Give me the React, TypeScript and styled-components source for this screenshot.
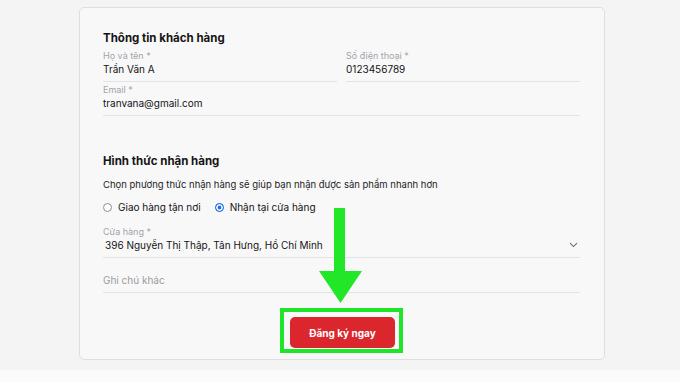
import React from 'react'
import styled, { createGlobalStyle } from 'styled-components'

const GlobalStyle = createGlobalStyle`
  html, body {
    margin: 0;
    padding: 0;
    background: #f4f4f5;
    font-family: Inter, "Noto Sans", "Liberation Sans", sans-serif;
    color: #141414;
  }
  * { box-sizing: border-box; }
`

const Page = styled.div`
  width: 680px;
  height: 382px;
  overflow: hidden;
  display: flex;
  flex-direction: column;
  padding-top: 7px;
`

const Card = styled.div`
  position: relative;
  width: 526px;
  margin-left: 79px;
  height: 353px;
  background: #f8f8f9;
  border: 1px solid #dedfe2;
  border-radius: 5px;
  padding: 22px 24px 0 23px;
  display: flex;
  flex-direction: column;
`

const BottomBand = styled.div`
  margin-top: 10px;
  height: 12px;
  background: #fbfbfb;
`

const Title = styled.h2<{ $top?: number }>`
  margin: ${({ $top }) => $top ?? 0}px 0 0 0;
  font-size: 11.5px;
  line-height: 16px;
  font-weight: 700;
`

const Row = styled.div`
  display: grid;
  grid-template-columns: 234px 234px;
  column-gap: 9px;
  margin-top: 4px;
`

const Field = styled.div<{ $top?: number; $pad?: number }>`
  display: flex;
  flex-direction: column;
  margin-top: ${({ $top }) => $top ?? 0}px;
  padding-bottom: ${({ $pad }) => $pad ?? 5}px;
  border-bottom: 1px solid #e2e3e6;
  position: relative;
`

const Label = styled.span`
  font-size: 9px;
  line-height: 12px;
  color: #a3a3aa;
`

const Value = styled.span<{ $muted?: boolean; $indent?: number }>`
  font-size: 10px;
  line-height: 14px;
  color: ${({ $muted }) => ($muted ? '#9b9ba2' : '#141414')};
  padding-left: ${({ $indent }) => $indent ?? 0}px;
`

const Desc = styled.p`
  margin: 10px 0 0 0;
  font-size: 9.5px;
  line-height: 12px;
  color: #1c1c1c;
`

const RadioRow = styled.div`
  display: flex;
  align-items: center;
  margin-top: 9px;
  height: 14px;
`

const RadioItem = styled.label`
  display: flex;
  align-items: center;
  gap: 6px;
  font-size: 10px;
  line-height: 14px;
  margin-right: 14px;
`

const RadioDot = styled.span<{ $checked?: boolean }>`
  width: 9px;
  height: 9px;
  border-radius: 50%;
  border: 1px solid ${({ $checked }) => ($checked ? '#1d6ee6' : '#8e8e93')};
  background: ${({ $checked }) => ($checked ? '#1d6ee6' : '#fff')};
  box-shadow: ${({ $checked }) => ($checked ? 'inset 0 0 0 1.6px #fff' : 'none')};
`

const Chevron = styled.svg`
  position: absolute;
  right: 2px;
  top: 16px;
`

const Actions = styled.div`
  display: flex;
  justify-content: center;
  margin-top: 24px;
`

const ButtonWrap = styled.div`
  position: relative;
  margin-left: 2px;
`

const Highlight = styled.div`
  position: absolute;
  left: -10px;
  right: -8px;
  top: -9px;
  bottom: -5px;
  border: 4px solid #1fe52a;
  pointer-events: none;
`

const SubmitButton = styled.button`
  width: 105px;
  height: 31px;
  border: none;
  border-radius: 5px;
  background: #da262c;
  color: #fff;
  font-family: Inter, "Noto Sans", "Liberation Sans", sans-serif;
  font-size: 10px;
  font-weight: 700;
  cursor: pointer;
`

const Arrow = styled.svg`
  position: absolute;
  left: 239px;
  top: 200px;
`

export default function App() {
  return (
    <>
      <GlobalStyle />
      <Page>
        <Card>
          <Title>Thông tin khách hàng</Title>
          <Row>
            <Field>
              <Label>Họ và tên *</Label>
              <Value>Trần Văn A</Value>
            </Field>
            <Field>
              <Label>Số điện thoại *</Label>
              <Value>0123456789</Value>
            </Field>
          </Row>
          <Field $top={2}>
            <Label>Email *</Label>
            <Value>tranvana@gmail.com</Value>
          </Field>

          <Title $top={37}>Hình thức nhận hàng</Title>
          <Desc>Chọn phương thức nhận hàng sẽ giúp bạn nhận được sản phẩm nhanh hơn</Desc>
          <RadioRow>
            <RadioItem>
              <RadioDot />
              Giao hàng tận nơi
            </RadioItem>
            <RadioItem>
              <RadioDot $checked />
              Nhận tại cửa hàng
            </RadioItem>
          </RadioRow>
          <Field $top={12}>
            <Label>Cửa hàng *</Label>
            <Value $indent={2}>396 Nguyễn Thị Thập, Tân Hưng, Hồ Chí Minh</Value>
            <Chevron width="9" height="6" viewBox="0 0 9 6">
              <path d="M1 1.2 L4.5 4.6 L8 1.2" fill="none" stroke="#6e6e73" strokeWidth="1.1" />
            </Chevron>
          </Field>
          <Field $top={15}>
            <Value $muted>Ghi chú khác</Value>
          </Field>

          <Actions>
            <ButtonWrap>
              <Highlight />
              <SubmitButton>Đăng ký ngay</SubmitButton>
            </ButtonWrap>
          </Actions>

          <Arrow width="43" height="95" viewBox="0 0 43 95">
            <rect x="15" y="0" width="11" height="64" fill="#22e628" />
            <polygon points="0,63 43,63 21.5,95" fill="#22e628" />
          </Arrow>
        </Card>
        <BottomBand />
      </Page>
    </>
  )
}
